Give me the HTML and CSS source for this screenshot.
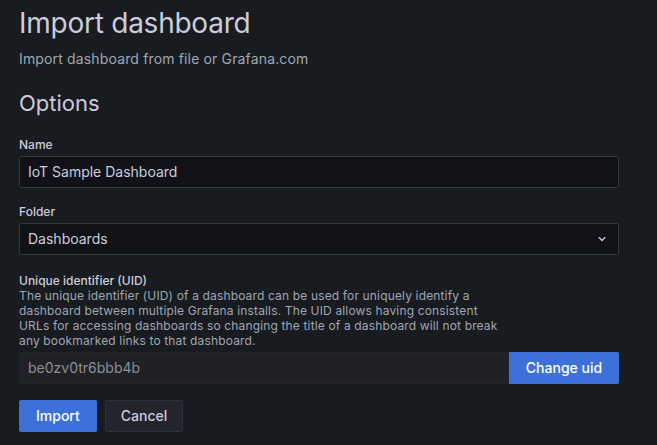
FILE: index.html
```html
<!DOCTYPE html>
<html>
<head>
<meta charset="utf-8">
<link rel="stylesheet" href="styles.css">
</head>
<body>
<div class="page">
  <h1 class="title">Import dashboard</h1>
  <div class="subtitle">Import dashboard from file or Grafana.com</div>
  <h3 class="section">Options</h3>

  <div class="field">
    <label class="label">Name</label>
    <div class="input"><span>IoT Sample Dashboard</span></div>
  </div>

  <div class="field">
    <label class="label">Folder</label>
    <div class="input select">
      <span>Dashboards</span>
      <svg class="chev" width="16" height="16" viewBox="0 0 24 24"><path d="M17 9.17a1 1 0 0 0-1.41 0L12 12.71 8.46 9.17a1 1 0 0 0-1.41 0 1 1 0 0 0 0 1.42l4.24 4.24a1 1 0 0 0 1.42 0L17 10.59a1 1 0 0 0 0-1.42Z" fill="#ccccdc"/></svg>
    </div>
  </div>

  <div class="field uid">
    <label class="label">Unique identifier (UID)</label>
    <div class="desc">The unique identifier (UID) of a dashboard can be used for uniquely identify a dashboard between multiple Grafana installs. The UID allows having consistent URLs for accessing dashboards so changing the title of a dashboard will not break any bookmarked links to that dashboard.</div>
    <div class="uid-row">
      <div class="input disabled"><span>be0zv0tr6bbb4b</span></div>
      <button class="btn primary">Change uid</button>
    </div>
  </div>

  <div class="actions">
    <button class="btn primary">Import</button>
    <button class="btn secondary">Cancel</button>
  </div>
</div>
</body>
</html>
```

FILE: styles.css
```css
html, body {
  margin: 0;
  padding: 0;
  background: #181b1f;
}
body {
  font-family: Inter, "Noto Sans", sans-serif;
  color: #ccccdc;
}
.page {
  padding: 7px 0 0 19px;
  width: 600px;
}
.title {
  margin: 0;
  font-size: 28px;
  font-weight: 400;
  line-height: 1.2;
  letter-spacing: -0.25px;
  color: #ccccdc;
}
.subtitle {
  margin-top: 7px;
  font-size: 14px;
  line-height: 21px;
  letter-spacing: 0.15px;
  color: #9fa7b3;
}
.section {
  margin: 21px 0 0 0;
  font-size: 22px;
  font-weight: 400;
  line-height: 1.2;
}
.field {
  margin-bottom: 16px;
}
.section + .field {
  margin-top: 21px;
}
.field.uid {
  padding-top: 2px;
}
.label {
  display: block;
  font-size: 12px;
  font-weight: 500;
  line-height: 15px;
  margin-bottom: 4px;
  color: #ccccdc;
}
.field .label + .desc {
  margin-top: -4px;
}
.desc {
  font-size: 12px;
  line-height: 15px;
  letter-spacing: 0.15px;
  color: #9fa7b3;
  margin-bottom: 4px;
  width: 484px;
}
.input {
  box-sizing: border-box;
  height: 32px;
  display: flex;
  align-items: center;
  padding: 0 8px;
  background: #111217;
  border: 1px solid #36383d;
  border-radius: 2px;
  font-size: 14px;
  color: #ccccdc;
}
.select {
  justify-content: space-between;
  padding-right: 8px;
}
.chev {
  display: block;
}
.uid-row {
  display: flex;
}
.uid-row .input {
  flex: 1;
}
.input.disabled {
  background: #1f2126;
  border-color: #24262b;
  color: #8e8f95;
  border-radius: 2px 0 0 2px;
}
.btn {
  box-sizing: border-box;
  height: 32px;
  padding: 0 16px;
  font-family: inherit;
  font-size: 14px;
  font-weight: 500;
  white-space: nowrap;
  border-radius: 2px;
  border: 1px solid transparent;
  cursor: pointer;
}
.primary {
  background: #3d71d9;
  color: #ffffff;
}
.uid-row .primary {
  border-radius: 0 2px 2px 0;
  width: 110px;
  padding: 0;
}
.secondary {
  background: #22252b;
  border-color: #2f3137;
  color: #ccccdc;
  padding: 0 15px;
}
.actions {
  display: flex;
  gap: 8px;
}
```
